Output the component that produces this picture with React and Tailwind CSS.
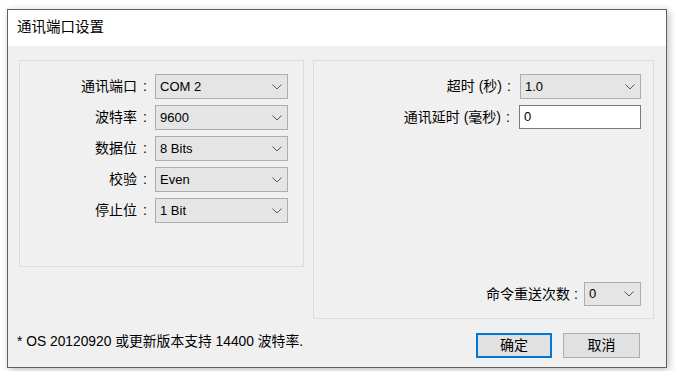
import React from "react";

const FONT = { fontFamily: '"Liberation Sans", "Noto Sans CJK SC", sans-serif' };

function Chevron() {
  return (
    <svg width="10" height="6" viewBox="0 0 10 6" className="shrink-0">
      <path d="M0.5 0.5 L5 5 L9.5 0.5" fill="none" stroke="#5a5a5a" strokeWidth="1" />
    </svg>
  );
}

function Combo({ value, w }) {
  return (
    <div
      className={`flex items-center justify-between h-[25px] bg-[#e5e5e5] border border-[#adadad] pl-[4px] pr-[5px] text-[13px] text-black ${w}`}
    >
      <span>{value}</span>
      <Chevron />
    </div>
  );
}

function LeftRow({ label, value }) {
  return (
    <div className="flex items-center h-[25px]">
      <span className="w-[117px] text-right text-[14px] text-black">{label}</span>
      <span className="w-[18px] pl-[6px] text-[14px] text-black">:</span>
      <Combo value={value} w="w-[133px]" />
    </div>
  );
}

export default function App() {
  return (
    <div className="w-[675px] h-[371px] bg-white overflow-hidden pt-[9px] pl-[7px]" style={FONT}>
      <div className="w-[660px] h-[359px] border border-[#5f5f5f] flex flex-col bg-[#f0f0f0] shadow-[2px_2px_8px_rgba(0,0,0,0.25)]">
        <div className="h-[36px] bg-white flex items-center pl-[9px] text-[14.5px] text-black shrink-0">
          通讯端口设置
        </div>
        <div className="flex-1 flex flex-col pt-[14px] pl-[11px] pr-[12px]">
          <div className="flex items-start gap-[9px]">
            <div className="w-[285px] h-[207px] border border-[#dcdcdc] pt-[13px] flex flex-col gap-[6px]">
              <LeftRow label="通讯端口" value="COM 2" />
              <LeftRow label="波特率" value="9600" />
              <LeftRow label="数据位" value="8 Bits" />
              <LeftRow label="校验" value="Even" />
              <LeftRow label="停止位" value="1 Bit" />
            </div>
            <div className="w-[341px] h-[259px] border border-[#dcdcdc] pt-[13px] pr-[12px] pb-[12px] flex flex-col items-end gap-[6px]">
              <div className="flex items-center h-[25px]">
                <span className="text-[14px] text-black">超时 (秒)</span>
                <span className="w-[18px] pl-[5px] text-[14px] text-black">:</span>
                <Combo value="1.0" w="w-[121px]" />
              </div>
              <div className="flex items-center h-[24px]">
                <span className="text-[14px] text-black">通讯延时 (毫秒)</span>
                <span className="w-[18px] pl-[5px] text-[14px] text-black">:</span>
                <div className="w-[122px] h-[24px] bg-white border border-[#7a7a7a] flex items-center pl-[4px] text-[13px] text-black">
                  0
                </div>
              </div>
              <div className="flex items-center h-[24px] mt-auto">
                <span className="text-[14px] text-black">命令重送次数</span>
                <span className="w-[14px] pl-[4px] text-[14px] text-black">:</span>
                <div className="flex items-center justify-between w-[57px] h-[24px] bg-[#e5e5e5] border border-[#adadad] pl-[4px] pr-[6px] text-[13px] text-black">
                  <span>0</span>
                  <Chevron />
                </div>
              </div>
            </div>
          </div>
          <div className="flex items-start mt-[14px]">
            <span className="-ml-[2px] text-[13.8px] leading-[18px] text-black">
              * OS 20120920 或更新版本支持 14400 波特率.
            </span>
            <div className="ml-auto mr-[14px] flex gap-[11px]">
              <button className="w-[76px] h-[25px] bg-[#e1e1e1] border-2 border-[#0078d7] text-[14px] text-black flex items-center justify-center">
                确定
              </button>
              <button className="w-[77px] h-[25px] bg-[#e1e1e1] border border-[#adadad] text-[14px] text-black flex items-center justify-center">
                取消
              </button>
            </div>
          </div>
        </div>
      </div>
    </div>
  );
}
